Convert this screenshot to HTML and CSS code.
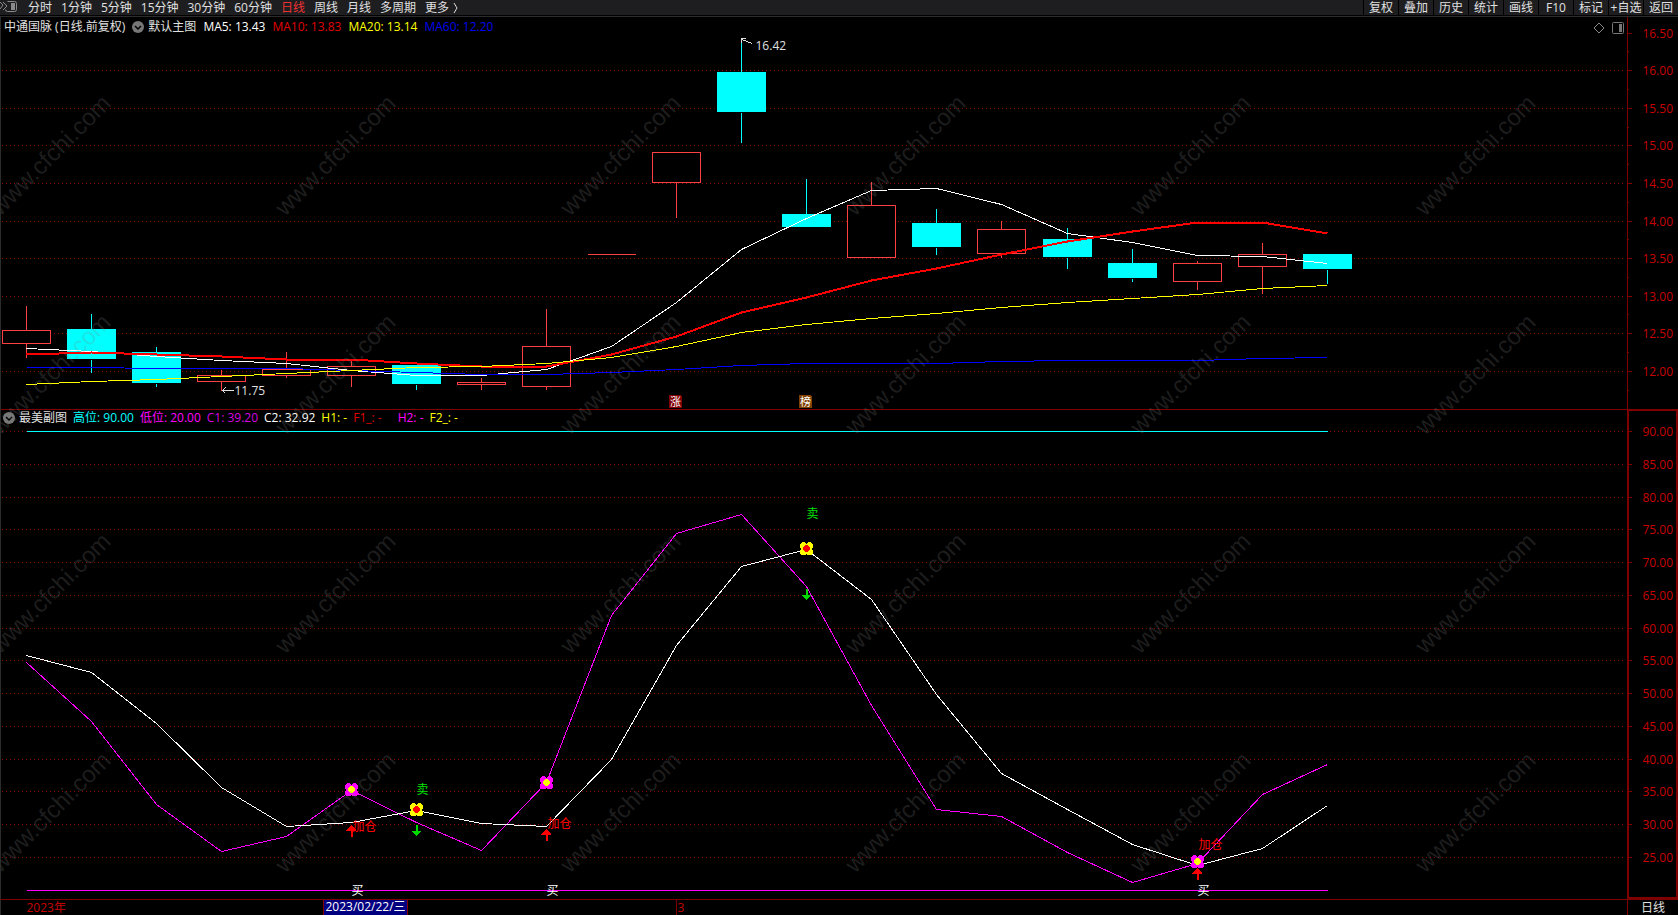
FILE: index.html
```
<!DOCTYPE html>
<html lang="zh-CN">
<head>
    <meta charset="UTF-8">
    <meta name="viewport" content="width=device-width, initial-scale=1.0">
    <title>中通国脉 日线</title>
    <link rel="stylesheet" href="styles.css">
</head>
<body>
    <header class="toolbar">
        <button class="panel-toggle" aria-label="侧栏">
            <svg width="18" height="14" viewBox="0 0 18 14" fill="none" stroke="#8a8a8a">
                <path d="M0 2l3 3-3 4M3 2l4 4-4 4"/>
                <path d="M7.500 1.500h7a2 2 0 0 1 2 2v6a2 2 0 0 1-2 2h-7a2 2 0 0 1-2-2"/>
                <rect x="11" y="3" width="4" height="7" fill="#8a8a8a" stroke="none"/>
            </svg>
        </button>
        <nav class="periods">
            <button>分时</button>
            <button>1分钟</button>
            <button>5分钟</button>
            <button>15分钟</button>
            <button>30分钟</button>
            <button>60分钟</button>
            <button class="active">日线</button>
            <button>周线</button>
            <button>月线</button>
            <button>多周期</button>
            <button class="more">更多
                <svg width="6" height="12" viewBox="0 0 6 12" fill="none" stroke="#ddd"><path d="M1 1l3 5-3 5"/></svg>
            </button>
        </nav>
        <div class="tools">
            <button>复权</button>
            <button>叠加</button>
            <button>历史</button>
            <button>统计</button>
            <button>画线</button>
            <button>F10</button>
            <button>标记</button>
            <button>+自选</button>
            <button>返回</button>
        </div>
    </header>

    <main class="charts">
        <section class="panel panel-main">
            <svg class="plot" id="mainPlot"></svg>
            <div class="legend">
                <span class="stock">中通国脉 (日线.前复权)</span>
                <button class="indicator">
                    <svg width="12" height="12" viewBox="0 0 12 12"><circle cx="6" cy="6" r="6" fill="#777"/><path d="M3 5l3 3 3-3" fill="none" stroke="#000" stroke-width="1.500"/></svg>
                    默认主图
                </button>
                <span class="white">MA5: 13.43</span>
                <span class="red">MA10: 13.83</span>
                <span class="yellow">MA20: 13.14</span>
                <span class="blue">MA60: 12.20</span>
            </div>
            <div class="panel-icons">
                <svg width="12" height="12" viewBox="0 0 12 12" fill="none" stroke="#888"><path d="M6 1l5 5-5 5-5-5z"/></svg>
                <svg width="12" height="12" viewBox="0 0 12 12" fill="none" stroke="#777"><rect x=".5" y=".5" width="11" height="11" rx="1"/><rect x="7" y="2" width="3" height="8" fill="#777" stroke="none"/></svg>
            </div>
        </section>

        <section class="panel panel-sub">
            <svg class="plot" id="subPlot"></svg>
            <div class="legend">
                <button class="indicator">
                    <svg width="12" height="12" viewBox="0 0 12 12"><circle cx="6" cy="6" r="6" fill="#777"/><path d="M3 5l3 3 3-3" fill="none" stroke="#000" stroke-width="1.500"/></svg>
                    最美副图
                </button>
                <span class="cyan">高位: 90.00</span>
                <span class="magenta">低位: 20.00</span>
                <span class="purple">C1: 39.20</span>
                <span class="white">C2: 32.92</span>
                <span class="yellow">H1: -</span>
                <span class="red spaced">F1_: -</span>
                <span class="magenta">H2: -</span>
                <span class="yellow">F2_: -</span>
            </div>
        </section>
        <svg class="watermark" id="watermark" aria-hidden="true"></svg>
    </main>

    <footer class="time-axis">
        <svg class="dates" id="dates"></svg>
        <button class="cycle">日线</button>
    </footer>

    <script src="chart.js"></script>
</body>
</html>
```

FILE: styles.css
```
:root {
    --axis: #800000;
    --axis-text: #c80000;
    --bar: #1e1e20;
    --text: #e0e0e0;
}

* {
    margin: 0;
    padding: 0;
    box-sizing: border-box;
}

body {
    display: flex;
    flex-direction: column;
    height: 100vh;
    overflow: hidden;
    background: #000;
    color: var(--text);
    font: 12px/16px "Open Sans", "Noto Sans CJK SC", sans-serif;
}

button {
    border: none;
    background: none;
    color: inherit;
    font: inherit;
    white-space: nowrap;
    cursor: pointer;
}

/* toolbar */
.toolbar {
    display: flex;
    flex: none;
    height: 16px;
    background: var(--bar);
    border-bottom: 1px solid #000;
}

.toolbar button {
    line-height: 14px;
}

.panel-toggle {
    display: flex;
    width: 28px;
}

.periods {
    display: flex;
    flex: 1;
    gap: 9px;
}

.periods .active {
    color: #f03232;
}

.more {
    display: flex;
    align-items: center;
    gap: 4px;
}

.tools {
    display: flex;
}

.tools button {
    width: 35px;
    border-left: 1px solid #000;
}

/* charts */
.charts {
    position: relative;
    display: flex;
    flex: 1;
    flex-direction: column;
    min-height: 0;
    border-left: 1px solid #2c2c2c;
}

.panel {
    display: grid;
    grid-template-rows: minmax(0, 1fr);
    grid-template-columns: minmax(0, 1fr);
    min-height: 0;
}

.panel-main {
    flex: 4 1 0;
    border-top: 1px solid #2c2c2c;
}

.panel-sub {
    flex: 5 1 0;
}

.plot,
.legend,
.panel-icons {
    grid-area: 1 / 1;
}

.plot {
    width: 100%;
    height: 100%;
}

.legend {
    display: flex;
    align-self: start;
    gap: 7px;
    padding: 2px 3px;
    white-space: nowrap;
}

.panel-sub .legend {
    gap: 6px;
    padding: 1px 2px;
}

.indicator {
    display: flex;
    align-items: center;
    gap: 4px;
}

.panel-icons {
    display: flex;
    align-self: start;
    justify-self: end;
    gap: 7px;
    padding: 5px 54px 0 0;
}

.spaced { margin-right: 10px; }
.white { color: #fff; }
.red { color: #e00000; }
.yellow { color: #ff0; }
.blue { color: #0000f0; }
.cyan { color: #0ff; }
.magenta { color: #f0f; }
.purple { color: #d800e0; }

/* plot parts */
.plot line,
.plot rect,
.plot polyline,
.plot path,
.plot circle,
.dates rect,
.dates line {
    shape-rendering: crispEdges;
}

.grid {
    stroke: var(--axis);
    stroke-dasharray: 1 3;
}

.frame {
    stroke: var(--axis);
    fill: none;
}

.axis-label,
.date-label {
    fill: var(--axis-text);
}

.up {
    stroke: #ff4040;
    fill: #000;
}

.wick-up { stroke: #ff4040; }
.wick-down { stroke: #0ff; }
.down { fill: #0ff; }

.series {
    fill: none;
    stroke-width: 1;
}

.series.thick {
    stroke-width: 2;
}

.note {
    fill: #e0e0e0;
}

.note-arrow {
    fill: none;
    stroke: #e0e0e0;
}

.sell { fill: #00e000; }
.add { fill: #f00; }
.buy { fill: #fff; }
.tag { fill: #fff; font-size: 11px; }

.watermark {
    position: absolute;
    inset: 0;
    width: 100%;
    height: 100%;
    pointer-events: none;
    fill: rgba(128, 128, 128, 0.24);
    font: 24px "Liberation Sans", sans-serif;
}

/* time axis */
.time-axis {
    display: flex;
    flex: none;
    height: 16px;
    border-top: 1px solid var(--axis);
    border-left: 1px solid #2c2c2c;
}

.dates {
    flex: 1;
    height: 15px;
    min-width: 0;
}

.current-bg {
    fill: #000080;
    stroke: var(--axis);
}

.current {
    fill: #fff;
}

.cycle {
    width: 51px;
    border-left: 1px solid var(--axis);
    line-height: 15px;
}
```

FILE: chart.js
```
const NS = 'http://www.w3.org/2000/svg';
const AXIS_WIDTH = 51;
const SLOTS = 25;

// [top of body, bottom of body, high, low, direction]
const candles = [
    [12.55, 12.37, 12.87, 12.19, 1],
    [12.56, 12.16, 12.77, 11.99, 0],
    [12.25, 11.84, 12.33, 11.80, 0],
    [11.94, 11.87, 12.03, 11.75, 1],
    [12.03, 11.94, 12.27, 11.92, 1],
    [12.06, 11.94, 12.15, 11.80, 1],
    [12.08, 11.83, 12.08, 11.76, 0],
    [11.85, 11.82, 11.92, 11.76, 1],
    [12.33, 11.80, 12.83, 11.76, 1],
    [13.56, 13.56, 13.56, 13.56, 1],
    [14.91, 14.51, 14.91, 14.05, 1],
    [15.97, 15.44, 16.42, 15.04, 0],
    [14.09, 13.91, 14.57, 13.91, 0],
    [14.21, 13.51, 14.53, 13.51, 1],
    [13.97, 13.65, 14.17, 13.56, 0],
    [13.89, 13.57, 14.01, 13.52, 1],
    [13.76, 13.52, 13.92, 13.37, 0],
    [13.44, 13.24, 13.64, 13.19, 0],
    [13.43, 13.19, 13.47, 13.09, 1],
    [13.56, 13.40, 13.72, 13.04, 1],
    [13.56, 13.35, 13.56, 13.17, 0]
];

const ma5 = [12.30, 12.26, 12.20, 12.14, 12.10, 12.01, 11.95, 11.95, 12.02, 12.33, 12.91, 13.62, 14.04, 14.41, 14.43, 14.22, 13.84, 13.71, 13.54, 13.53, 13.43];
const ma10 = [12.23, 12.25, 12.23, 12.20, 12.16, 12.16, 12.11, 12.07, 12.07, 12.23, 12.46, 12.78, 12.98, 13.21, 13.37, 13.56, 13.73, 13.86, 13.98, 13.98, 13.83];
const ma20 = [11.82, 11.86, 11.89, 11.93, 11.97, 12.01, 12.05, 12.06, 12.10, 12.19, 12.33, 12.52, 12.62, 12.70, 12.77, 12.85, 12.91, 12.97, 13.02, 13.10, 13.14];
const ma60 = [12.05, 12.05, 12.04, 12.04, 12.04, 12.01, 11.99, 11.96, 11.96, 11.98, 12.03, 12.08, 12.10, 12.11, 12.11, 12.13, 12.14, 12.14, 12.15, 12.17, 12.18];

const c1 = [54.8, 45.8, 33.1, 25.9, 28.2, 35.2, 30.3, 26.0, 36.4, 61.9, 74.4, 77.4, 66.3, 48.1, 32.3, 31.3, 25.8, 21.1, 24.1, 34.6, 39.2];
const c2 = [55.8, 53.2, 45.4, 35.6, 29.7, 30.3, 32.1, 30.2, 29.7, 40.0, 57.4, 69.4, 72.0, 64.3, 49.9, 37.8, 32.3, 26.9, 23.8, 26.4, 32.9];

const buySignals = [
    { i: 5, flower: 35.3, text: 29.7, arrow: 30.0 },
    { i: 8, flower: 36.4, text: 30.1, arrow: 29.4 },
    { i: 18, flower: 24.3, text: 27.0, arrow: 23.5 }
];
const sellSignals = [
    { i: 6, flower: 32.3, text: 35.4, arrow: 30.0 },
    { i: 12, flower: 72.2, text: 77.5, arrow: 66.0 }
];

function add(parent, tag, attrs, text) {
    const el = document.createElementNS(NS, tag);
    for (const key in attrs) el.setAttribute(key, attrs[key]);
    if (text !== undefined) el.textContent = text;
    parent.appendChild(el);
    return el;
}

function line(svg, x1, y1, x2, y2, cls) {
    add(svg, 'line', { x1, y1, x2, y2, class: cls });
}

// Centre of bar i
function barX(i, width) {
    return Math.floor((i + 0.39) * width / SLOTS) + 0.5;
}

// Scales for one panel: price/value -> y, bar index -> x
function setup(svg, max, min) {
    svg.innerHTML = '';
    const width = svg.clientWidth - AXIS_WIDTH;
    const height = svg.clientHeight;
    return {
        width,
        height,
        x: i => barX(i, width),
        y: v => Math.round((max - v) / (max - min) * height) + 0.5
    };
}

function drawScale(svg, s, values, step, noGrid) {
    values.forEach(v => {
        const y = s.y(v);
        if (v !== noGrid) line(svg, 1, y, s.width - 3, y, 'grid');
        line(svg, s.width, y, s.width + 5, y, 'frame');
        line(svg, s.width, s.y(v - step / 2), s.width + 2, s.y(v - step / 2), 'frame');
        add(svg, 'text', { x: s.width + 46, y: y + 4, 'text-anchor': 'end', class: 'axis-label' }, v.toFixed(2));
    });
}

function drawSeries(svg, s, data, color, thick) {
    const points = data.map((v, i) => s.x(i) + ',' + s.y(v)).join(' ');
    add(svg, 'polyline', { points, class: thick ? 'series thick' : 'series', stroke: color });
}

function drawCandle(svg, s, i, [top, bottom, high, low, up]) {
    const x = s.x(i);
    const yTop = s.y(top);
    const yBottom = s.y(bottom);
    const wick = up ? 'wick-up' : 'wick-down';
    if (high > top) line(svg, x, s.y(high), x, yTop, wick);
    if (low < bottom) line(svg, x, yBottom, x, s.y(low), wick);
    if (top === bottom) {
        line(svg, x - 24, yTop, x + 24, yTop, wick);
    } else if (up) {
        add(svg, 'rect', { x: x - 24, y: yTop, width: 48, height: yBottom - yTop, class: 'up' });
    } else {
        add(svg, 'rect', { x: x - 24.5, y: yTop - 0.5, width: 49, height: yBottom - yTop, class: 'down' });
    }
}

function drawTag(svg, s, i, text, fill) {
    const x = s.x(i) - 7.5;
    const y = s.height - 14;
    add(svg, 'path', { d: `M${x} ${y}h11l2 2v11h-13z`, fill });
    add(svg, 'text', { x: x + 1, y: y + 11, class: 'tag' }, text);
}

function drawMain() {
    const svg = document.getElementById('mainPlot');
    const s = setup(svg, 16.707, 11.493);
    const levels = [];
    for (let v = 16.5; v >= 12; v -= 0.5) levels.push(v);
    drawScale(svg, s, levels, 0.5, 16.5);
    line(svg, s.width + 0.5, 0, s.width + 0.5, s.height, 'frame');

    candles.forEach((c, i) => drawCandle(svg, s, i, c));
    drawSeries(svg, s, ma5, '#fff');
    drawSeries(svg, s, ma60, '#00f');
    drawSeries(svg, s, ma10, '#f00', true);
    drawSeries(svg, s, ma20, '#ff0');

    // highest and lowest price notes
    let x = s.x(11);
    let y = s.y(16.42);
    add(svg, 'path', { d: `M${x + 4} ${y - 1}h-4v4M${x} ${y}l11 4`, class: 'note-arrow' });
    add(svg, 'text', { x: x + 14, y: y + 10, class: 'note' }, '16.42');
    x = s.x(3);
    y = s.y(11.75);
    add(svg, 'path', { d: `M${x + 4} ${y - 3}l-3 3 3 3M${x} ${y}h12`, class: 'note-arrow' });
    add(svg, 'text', { x: x + 13, y: y + 4, class: 'note' }, '11.75');

    drawTag(svg, s, 10, '涨', '#800000');
    drawTag(svg, s, 12, '榜', '#804000');
}

function drawFlower(svg, x, y, petals, core) {
    [[-3, -3], [3, -3], [-3, 3], [3, 3]].forEach(([dx, dy]) => {
        add(svg, 'circle', { cx: x + dx, cy: y + dy, r: 3.5, fill: petals });
    });
    add(svg, 'circle', { cx: x, cy: y, r: 5, fill: petals });
    add(svg, 'circle', { cx: x, cy: y, r: 3.3, fill: core });
}

function drawSub() {
    const svg = document.getElementById('subPlot');
    const s = setup(svg, 93.36, 18.56);
    const levels = [];
    for (let v = 90; v >= 25; v -= 5) levels.push(v);
    drawScale(svg, s, levels, 5);
    line(svg, 0, 0.5, s.width, 0.5, 'frame');
    add(svg, 'rect', { x: s.width + 1, y: 1, width: AXIS_WIDTH - 2, height: s.height - 2, class: 'frame', 'stroke-width': 2 });

    drawSeries(svg, s, c1.map(() => 90), '#0ff');
    drawSeries(svg, s, c1.map(() => 20), '#f0f');
    drawSeries(svg, s, c1, '#f0f');
    drawSeries(svg, s, c2, '#fff');

    buySignals.forEach(b => {
        const x = s.x(b.i);
        const y = s.y(b.arrow);
        drawFlower(svg, x, s.y(b.flower), '#f0f', '#ff0');
        add(svg, 'path', { d: `M${x} ${y}l5 6h-4v6h-2v-6h-4z`, fill: '#f00' });
        add(svg, 'text', { x: x + 1, y: s.y(b.text) + 4, class: 'add' }, '加仓');
        add(svg, 'text', { x, y: s.y(20) + 4, class: 'buy' }, '买');
    });
    sellSignals.forEach(b => {
        const x = s.x(b.i);
        const y = s.y(b.arrow);
        drawFlower(svg, x, s.y(b.flower), '#ff0', '#f00');
        add(svg, 'path', { d: `M${x - 1} ${y}h2v6h4l-5 6-5-6h4z`, fill: '#00d800' });
        add(svg, 'text', { x, y: s.y(b.text) + 4, class: 'sell' }, '卖');
    });
}

function drawDates() {
    const svg = document.getElementById('dates');
    svg.innerHTML = '';
    const x = i => barX(i, svg.clientWidth);
    add(svg, 'text', { x: x(0), y: 12, class: 'date-label' }, '2023年');
    add(svg, 'rect', { x: x(5) - 28, y: -0.5, width: 84, height: 16, class: 'current-bg' });
    add(svg, 'text', { x: x(5) + 14, y: 11, 'text-anchor': 'middle', class: 'current' }, '2023/02/22/三');
    line(svg, x(10), 0, x(10), 15, 'frame');
    add(svg, 'text', { x: x(10) + 1, y: 12, class: 'date-label' }, '3');
}

function drawWatermark() {
    const svg = document.getElementById('watermark');
    svg.innerHTML = '';
    for (let y = 201; y < svg.clientHeight + 100; y += 219) {
        for (let x = -1; x < svg.clientWidth - 200; x += 285) {
            add(svg, 'text', { transform: `translate(${x} ${y}) rotate(-45)` }, 'www.cfchi.com');
        }
    }
}

function draw() {
    drawMain();
    drawSub();
    drawDates();
    drawWatermark();
}

draw();
window.addEventListener('resize', draw);
```
